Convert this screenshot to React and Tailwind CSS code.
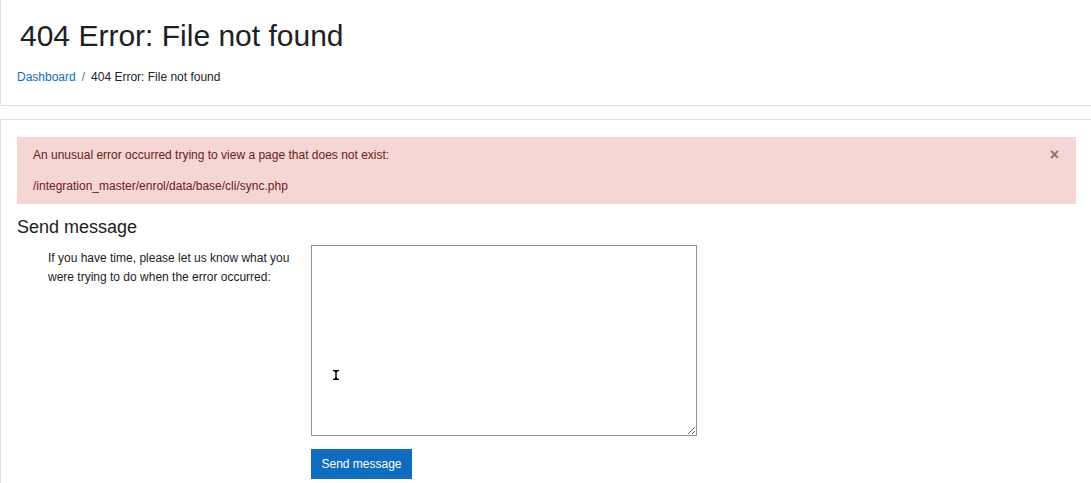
import React from "react"

export default function App() {
  return (
    <div className="min-h-[483px] bg-white text-[#1d2125] font-['Liberation_Sans',Arial,sans-serif]">
      {/* page header */}
      <header className="border-l border-b border-[#dee2e6] h-[106px] pl-4 pr-4">
        <h1 className="pt-[18px] ml-[3px] text-[30px] leading-[36px] font-normal text-[#1d2125]">404 Error: File not found</h1>
        <nav className="mt-[14px] text-[12px] leading-[18px] flex items-center">
          <a href="#" className="text-[#0f6cbf]">Dashboard</a>
          <span className="px-[6px] text-[#6a737b]">/</span>
          <span className="text-[#1d2125]">404 Error: File not found</span>
        </nav>
      </header>

      {/* main region */}
      <main className="mt-[13px] border-l border-t border-[#dee2e6] pl-4 pr-[15px] pt-[17px] pb-4">
        <div className="relative bg-[#f4d6d5] text-[#6e1a1a] text-[12px] leading-[18px] pl-4 pr-10 pt-[9px] pb-[9px]">
          <p>An unusual error occurred trying to view a page that does not exist:</p>
          <p className="mt-[13px]">/integration_master/enrol/data/base/cli/sync.php</p>
          <button className="absolute right-[17px] top-[9px] text-[#8a7272] text-[16px] leading-[18px] font-bold">×</button>
        </div>

        <h2 className="mt-[12px] text-[18px] leading-[22px] font-normal text-[#1d2125]">Send message</h2>

        <form className="mt-[7px] flex">
          <label className="shrink-0 w-[294px] pl-[31px] pr-[10px] pt-[4px] text-[12px] leading-[19px] text-[#1d2125]">
            If you have time, please let us know what you were trying to do when the error occurred:
          </label>
          <div className="flex flex-col items-start">
            <div className="relative">
              <textarea className="block w-[386px] h-[191px] border border-[#8f959e] bg-white resize-y outline-none" />
              <svg className="absolute left-[22px] top-[125px]" width="6" height="10" viewBox="0 0 6 10">
                <path d="M0 0.5h6M0 9.5h6M3 0.5v9" stroke="#000" strokeWidth="1.4" fill="none" />
                <path d="M1 1h4L3 3zM1 9h4L3 7z" fill="#000" />
              </svg>
            </div>
            <button type="button" className="mt-[13px] w-[101px] h-[30px] bg-[#0f6cbf] text-white text-[12px] leading-[18px]">
              Send message
            </button>
          </div>
        </form>
      </main>
    </div>
  )
}
